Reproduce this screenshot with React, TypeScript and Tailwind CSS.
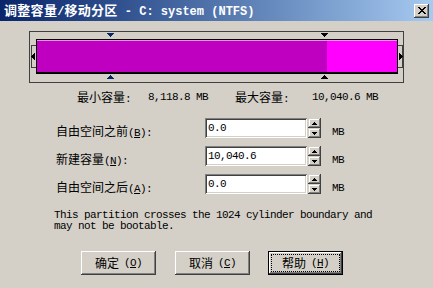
import React from "react";

function Cj({ children, className = "" }: { children: React.ReactNode; className?: string }) {
  return <span className={"font-['Noto_Sans_CJK_SC',sans-serif] tracking-normal text-[12px] " + className}>{children}</span>;
}

function DownTri({ color }: { color: string }) {
  return (
    <svg width="7" height="4" viewBox="0 0 7 4" shapeRendering="crispEdges">
      <rect x="0" y="0" width="7" height="1" fill={color} />
      <rect x="1" y="1" width="5" height="1" fill={color} />
      <rect x="2" y="2" width="3" height="1" fill={color} />
      <rect x="3" y="3" width="1" height="1" fill={color} />
    </svg>
  );
}

function UpTri({ color }: { color: string }) {
  return (
    <svg width="7" height="4" viewBox="0 0 7 4" shapeRendering="crispEdges">
      <rect x="3" y="0" width="1" height="1" fill={color} />
      <rect x="2" y="1" width="3" height="1" fill={color} />
      <rect x="1" y="2" width="5" height="1" fill={color} />
      <rect x="0" y="3" width="7" height="1" fill={color} />
    </svg>
  );
}

function Handle({ dir }: { dir: "l" | "r" }) {
  return (
    <svg width="5" height="23" viewBox="0 0 5 23" shapeRendering="crispEdges" className="mt-[6px]">
      <rect x="0" y="0" width="5" height="23" fill="#D4D0C8" />
      <rect x="0" y="0" width="5" height="1" fill="#404040" />
      <rect x="0" y="22" width="5" height="1" fill="#404040" />
      {dir === "l" ? (
        <>
          <rect x="0" y="0" width="1" height="23" fill="#404040" />
          <polygon points="0,11.5 4,7.5 4,15.5" fill="#000" />
        </>
      ) : (
        <>
          <rect x="4" y="0" width="1" height="23" fill="#404040" />
          <polygon points="5,11.5 1,7.5 1,15.5" fill="#000" />
        </>
      )}
    </svg>
  );
}

function SpinBtn({ up }: { up: boolean }) {
  return (
    <div className="w-[13px] h-[10px] bg-[#D4D0C8] flex items-center justify-center shadow-[inset_-1px_-1px_0_#404040,inset_1px_1px_0_#d4d0c8,inset_-2px_-2px_0_#808080,inset_2px_2px_0_#ffffff]">
      <svg width="5" height="3" viewBox="0 0 5 3" shapeRendering="crispEdges">
        {up ? (
          <>
            <rect x="2" y="0" width="1" height="1" fill="#000" />
            <rect x="1" y="1" width="3" height="1" fill="#000" />
            <rect x="0" y="2" width="5" height="1" fill="#000" />
          </>
        ) : (
          <>
            <rect x="0" y="0" width="5" height="1" fill="#000" />
            <rect x="1" y="1" width="3" height="1" fill="#000" />
            <rect x="2" y="2" width="1" height="1" fill="#000" />
          </>
        )}
      </svg>
    </div>
  );
}

function Row({ label, acc, value }: { label: string; acc: string; value: string }) {
  return (
    <div className="flex h-[20px] pl-[56px]">
      <div className="w-[149px] leading-[12px] mt-[7px] whitespace-nowrap">
        <Cj>{label}</Cj>(<span className="underline">{acc}</span>):
      </div>
      <div className="w-[102px] h-[20px] bg-white flex items-center pl-[3px] shadow-[inset_1px_1px_0_#808080,inset_-1px_-1px_0_#ffffff,inset_2px_2px_0_#404040,inset_-2px_-2px_0_#d4d0c8]">
        {value}
      </div>
      <div className="ml-[1px] flex flex-col">
        <SpinBtn up={true} />
        <SpinBtn up={false} />
      </div>
      <div className="ml-[11px] mt-[8px] leading-[12px]">MB</div>
    </div>
  );
}

function Btn({ label, acc, def = false }: { label: string; acc: string; def?: boolean }) {
  const inner = (
    <>
      <Cj>{label}</Cj>
      <span className="ml-[5px]">(<span className="underline">{acc}</span>)</span>
    </>
  );
  if (def) {
    return (
      <div className="w-[75px] h-[24px] border border-black bg-[#D4D0C8] px-[2px] py-[2px] shadow-[inset_-1px_-1px_0_#404040,inset_1px_1px_0_#ffffff,inset_-2px_-2px_0_#808080]">
        <div className="w-full h-full border border-dotted border-black flex items-center justify-center leading-[12px]">
          {inner}
        </div>
      </div>
    );
  }
  return (
    <div className="w-[75px] h-[24px] bg-[#D4D0C8] flex items-center justify-center leading-[12px] shadow-[inset_-1px_-1px_0_#404040,inset_1px_1px_0_#ffffff,inset_-2px_-2px_0_#808080,inset_2px_2px_0_#d4d0c8]">
      {inner}
    </div>
  );
}

export default function App() {
  return (
    <div className="w-[433px] h-[288px] bg-[#D4D0C8] overflow-hidden flex flex-col text-black font-['Liberation_Mono','Noto_Sans_CJK_SC',monospace] text-[11px] tracking-[-0.6px]">
      {/* Title bar */}
      <div className="h-[21px] shrink-0 flex items-center bg-linear-to-r from-[#0A246A] to-[#A6CAF0] pl-[4px] pr-[4px]">
        <div className="flex-1 text-white font-bold whitespace-pre leading-[14px] flex items-baseline">
          <span className="font-['Noto_Sans_CJK_SC',sans-serif] tracking-[0.3px] text-[13px] font-bold">调整容量</span>
          <span className="font-['Liberation_Mono',monospace] text-[12px] tracking-[0px]">/</span>
          <span className="font-['Noto_Sans_CJK_SC',sans-serif] tracking-[0.3px] text-[13px] font-bold">移动分区</span>
          <span className="font-['Liberation_Mono',monospace] text-[12px] tracking-[0px]"> - C: system (NTFS)</span>
        </div>
        <div className="w-[15px] h-[14px] bg-[#D4D0C8] flex items-center justify-center shadow-[inset_-1px_-1px_0_#404040,inset_1px_1px_0_#ffffff,inset_-2px_-2px_0_#808080,inset_2px_2px_0_#d4d0c8]">
          <svg width="8" height="7" viewBox="0 0 8 7" shapeRendering="crispEdges">
            <path d="M0 0h2v1h-2zM6 0h2v1h-2zM1 1h2v1h-2zM5 1h2v1h-2zM2 2h4v1h-4zM3 3h2v1h-2zM2 4h4v1h-4zM1 5h2v1h-2zM5 5h2v1h-2zM0 6h2v1h-2zM6 6h2v1h-2z" fill="#000" />
          </svg>
        </div>
      </div>

      {/* Partition bar frame */}
      <div className="mt-[10px] ml-[29px] w-[375px] h-[52px] border border-[#404040] flex flex-col">
        <div className="relative h-[7px]">
          <div className="absolute left-[77px] top-[1px] flex">
            <DownTri color="#0A246A" />
          </div>
          <div className="absolute left-[291px] top-[1px] flex">
            <DownTri color="#000000" />
          </div>
        </div>
        <div className="flex h-[35px] pl-[1px]">
          <Handle dir="l" />
          <div className="w-[362px] h-[35px] border-l border-r border-t border-b-2 border-black flex flex-col">
            <div className="h-[1px] bg-[#E890E8]" />
            <div className="flex-1 flex">
              <div className="w-[290px] bg-[#C000C0]" />
              <div className="flex-1 bg-[#FF00FF]" />
            </div>
          </div>
          <Handle dir="r" />
        </div>
        <div className="relative h-[8px]">
          <div className="absolute left-[77px] top-[1px] flex">
            <UpTri color="#0A246A" />
          </div>
          <div className="absolute left-[291px] top-[1px] flex">
            <UpTri color="#000000" />
          </div>
        </div>
      </div>

      {/* min / max */}
      <div className="mt-[8px] h-[12px] leading-[12px] flex pl-[77px] whitespace-pre">
        <div className="w-[71px]"><Cj>最小容量</Cj>:</div>
        <div className="w-[87px]">8,118.8 MB</div>
        <div className="w-[77px]"><Cj>最大容量</Cj>:</div>
        <div>10,040.6 MB</div>
      </div>

      {/* Form rows */}
      <div className="mt-[15px] flex flex-col gap-[8px]">
        <Row label="自由空间之前" acc="B" value="0.0" />
        <Row label="新建容量" acc="N" value="10,040.6" />
        <Row label="自由空间之后" acc="A" value="0.0" />
      </div>

      <div className="mt-[16px] pl-[54px] leading-[11px] whitespace-pre">
        This partition crosses the 1024 cylinder boundary and
        <br />
        may not be bootable.
      </div>

      <div className="mt-[19px] flex pl-[81px]">
        <Btn label="确定" acc="O" />
        <div className="w-[19px]" />
        <Btn label="取消" acc="C" />
        <div className="w-[18px]" />
        <Btn label="帮助" acc="H" def={true} />
      </div>
    </div>
  );
}
